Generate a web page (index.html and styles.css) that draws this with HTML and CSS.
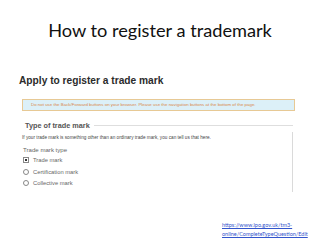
FILE: index.html
```
<!DOCTYPE html>
<html>
<head>
<meta charset="utf-8">
<link rel="stylesheet" href="styles.css">
</head>
<body>
<div class="slide">
  <h1 class="title">How to register a trademark</h1>
  <div class="shot">
    <h2 class="apply">Apply to register a trade mark</h2>
    <div class="notice">Do not use the Back/Forward buttons on your browser. Please use the navigation buttons at the bottom of the page.</div>
    <div class="fieldset">
      <div class="legend"><span class="legend-text">Type of trade mark</span><span class="legend-line"></span></div>
      <div class="body">
        <p class="hint">If your trade mark is something other than an ordinary trade mark, you can tell us that here.</p>
        <p class="label">Trade mark type</p>
        <div class="opt opt1"><span class="box checked"></span>Trade mark</div>
        <div class="opt opt2"><span class="box radio"></span>Certification mark</div>
        <div class="opt opt3"><span class="box radio"></span>Collective mark</div>
      </div>
    </div>
  </div>
  <div class="link"><a href="#">https://www.ipo.gov.uk/tm3-<br>online/CompleteTypeQuestion/Edit</a></div>
</div>
</body>
</html>
```
FILE: styles.css
```
html, body {
  margin: 0;
  padding: 0;
  background: #ffffff;
}
.slide {
  width: 320px;
  height: 240px;
  overflow: hidden;
  display: flex;
  flex-direction: column;
}
.title {
  margin: 19px 0 0 0;
  font-family: Lato, sans-serif;
  font-weight: 400;
  font-size: 18.2px;
  line-height: 22px;
  color: #111;
  text-align: center;
}
.shot {
  margin: 34px 0 0 19px;
  width: 276px;
  font-family: "Liberation Sans", Arial, sans-serif;
}
.apply {
  margin: 0;
  font-size: 10.2px;
  line-height: 12px;
  font-weight: 700;
  color: #2b2b2b;
}
.notice {
  margin: 12px 0 0 3px;
  height: 10px;
  border: 1px solid #e7c995;
  background: #dcf0f8;
  color: #d9884a;
  font-size: 4.4px;
  line-height: 10px;
  padding-left: 8px;
  white-space: nowrap;
  overflow: hidden;
}
.fieldset {
  margin: 9px 0 0 3px;
  width: 271px;
}
.legend {
  display: flex;
  align-items: center;
  height: 10px;
}
.legend-text {
  padding-left: 3px;
  font-size: 7.3px;
  font-weight: 700;
  color: #555;
  padding-right: 4px;
}
.legend-line {
  flex: 1;
  height: 1px;
  background: #dedede;
}
.body {
  border-right: 1px solid #dadada;
  margin-top: 2px;
  padding-top: 2px;
  height: 58px;
}
.hint {
  margin: 0;
  font-size: 4.7px;
  line-height: 7px;
  color: #444;
}
.label {
  margin: 5px 0 0 1px;
  font-size: 6.1px;
  line-height: 8px;
  color: #666;
}
.opt {
  display: flex;
  align-items: center;
  font-size: 5.8px;
  line-height: 8px;
  color: #666;
  margin-left: 1px;
}
.opt1 { margin-top: 2px; }
.opt2 { margin-top: 4px; }
.opt3 { margin-top: 3px; }
.box {
  width: 4px;
  height: 4px;
  border: 1px solid #888;
  margin-right: 4px;
  box-sizing: content-box;
}
.box.checked {
  background: radial-gradient(circle, #333 0 1.2px, #fff 1.5px);
}
.box.radio {
  border-radius: 50%;
}
.link {
  margin: 29px 0 0 222px;
  font-family: Lato, sans-serif;
  font-size: 5.5px;
  line-height: 9px;
}
.link a {
  color: #3355cc;
  text-decoration: underline;
}
```
